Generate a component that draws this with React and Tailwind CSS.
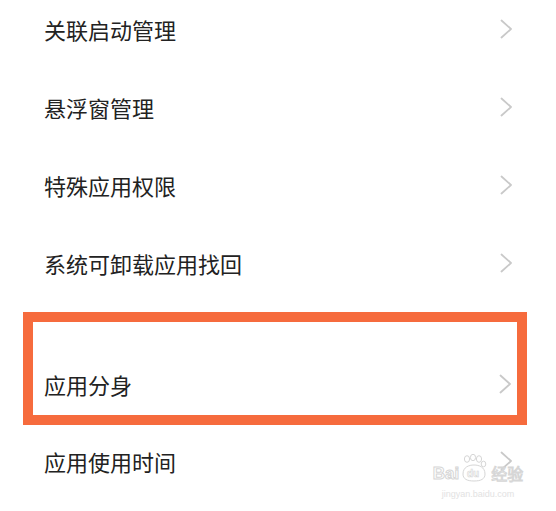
import React from "react";

const items = ["关联启动管理", "悬浮窗管理", "特殊应用权限", "系统可卸载应用找回"];

function Chevron() {
  return (
    <svg width="13" height="20" viewBox="0 0 13 20" fill="none">
      <polyline
        points="1.5,1.5 11,10 1.5,18.5"
        stroke="#c9c9c9"
        strokeWidth="1.8"
        strokeLinecap="round"
        strokeLinejoin="round"
      />
    </svg>
  );
}

function Row({ label }) {
  return (
    <div className="h-[78px] flex items-center justify-between pl-[44px] pr-[43px] pb-[6px]">
      <span className="text-[22px] leading-[30px] text-[#222]">{label}</span>
      <Chevron />
    </div>
  );
}

function Watermark() {
  return (
    <div className="absolute left-[426px] top-[454px] w-[104px] flex flex-col items-center pointer-events-none">
      <div className="flex items-end h-[28px]">
        <span className="text-[17px] leading-[17px] font-bold text-white [-webkit-text-stroke:1px_#d6d6d6] [font-family:'Liberation_Sans',sans-serif]">
          Bai
        </span>
        <svg width="30" height="28" viewBox="0 0 30 28" fill="none" stroke="#d6d6d6" strokeWidth="1">
          <ellipse cx="8" cy="5" rx="2.6" ry="3.3" />
          <ellipse cx="14" cy="3.5" rx="2.6" ry="3.2" />
          <ellipse cx="20" cy="5" rx="2.6" ry="3.3" />
          <ellipse cx="24.5" cy="10" rx="2.3" ry="2.8" />
          <path d="M4 20 C4 13 10 11 15 11 C20 11 26 13 26 20 C26 25 22 27 15 27 C8 27 4 25 4 20 Z" />
          <text x="8" y="23" fontSize="10" fontWeight="bold" fill="white" stroke="#d6d6d6" strokeWidth="0.6" fontFamily="Liberation Sans, sans-serif">du</text>
        </svg>
        <span className="ml-[2px] text-[16px] leading-[17px] text-white [-webkit-text-stroke:1px_#d6d6d6] [font-family:'Noto_Sans_CJK_SC',sans-serif]">
          经验
        </span>
      </div>
      <span className="mt-[7px] text-[9px] leading-[10px] text-[#e2e2e2] [font-family:'Liberation_Sans',sans-serif]">
        jingyan.baidu.com
      </span>
    </div>
  );
}

export default function App() {
  return (
    <div className="relative w-[556px] h-[511px] overflow-hidden bg-white [font-family:'Noto_Sans_CJK_SC',sans-serif]">
      <div className="-mt-[7px] flex flex-col">
        {items.map((label) => (
          <Row key={label} label={label} />
        ))}
        <div className="mt-[7px] ml-[23px] mr-[29px] h-[113px] border-[10px] border-[#f66b3d] flex items-end justify-between pl-[11px] pr-[5px] pb-[16px]">
          <span className="text-[22px] leading-[30px] text-[#222]">应用分身</span>
          <div className="mb-[5px]">
            <Chevron />
          </div>
        </div>
        <Row label="应用使用时间" />
      </div>
      <Watermark />
    </div>
  );
}
